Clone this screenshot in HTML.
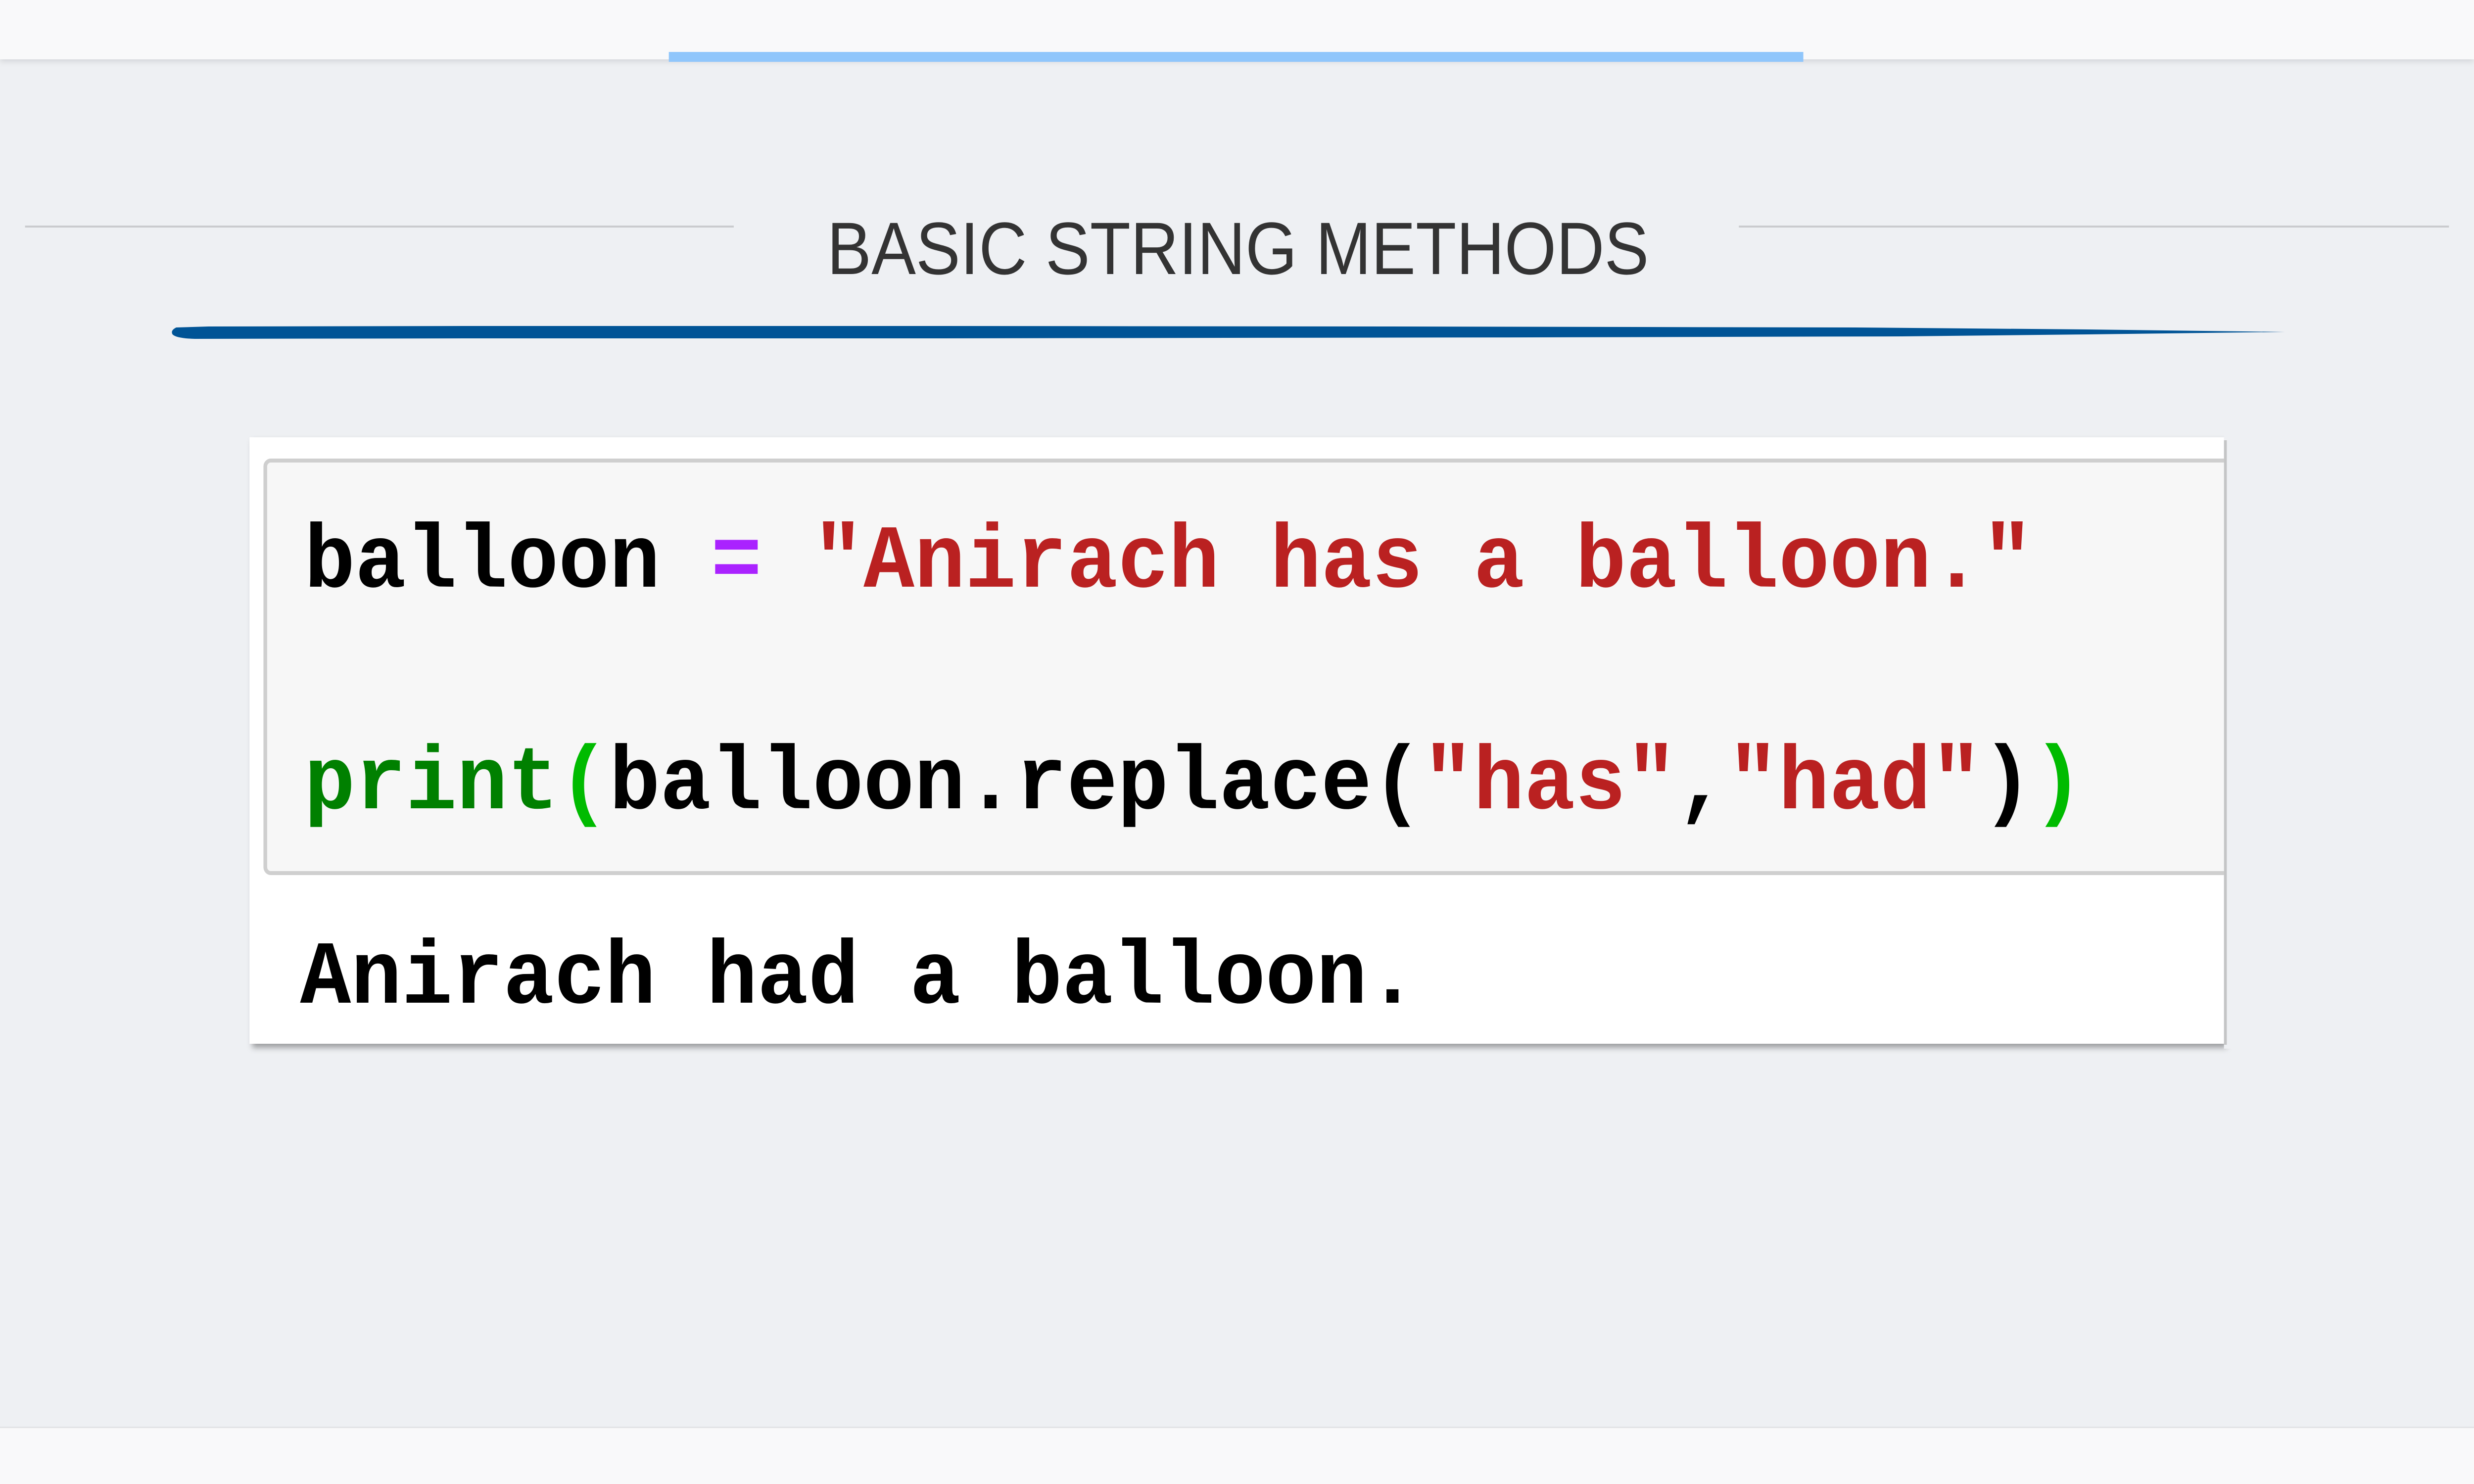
<!DOCTYPE html>
<html><head><meta charset="utf-8"><style>
html,body{margin:0;padding:0;width:100%;height:100%;overflow:hidden;}
body{background:#eef0f3;position:relative;}
svg{display:block;position:absolute;left:0;top:0;width:100vw;height:100vh;}
</style></head><body>
<svg viewBox="0 0 5334 3000" preserveAspectRatio="none">
<defs>
<filter id="sh" x="-5%" y="-5%" width="110%" height="115%"><feDropShadow dx="6" dy="8" stdDeviation="6" flood-color="#000" flood-opacity="0.35"/></filter>
<filter id="tb" x="-5%" y="-50%" width="110%" height="200%"><feDropShadow dx="0" dy="4" stdDeviation="6" flood-color="#000" flood-opacity="0.12"/></filter>
</defs>
<rect x="0" y="0" width="5334" height="3000" fill="#eef0f3"/>
<rect x="0" y="0" width="5334" height="120" fill="#f9f9fa" filter="url(#tb)"/>
<rect x="1442" y="105" width="2446" height="20" fill="#90c6fb"/>
<rect x="0" y="2885" width="5334" height="115" fill="#f9f9fa"/>
<rect x="0" y="2884" width="5334" height="3" fill="#e2e3e6"/>
<rect x="54" y="456" width="1528" height="4" fill="#cacbce"/>
<rect x="3749" y="456" width="1531" height="4" fill="#cacbce"/>
<text x="1783" y="554" textLength="1772" lengthAdjust="spacingAndGlyphs" font-family="Liberation Sans, sans-serif" font-size="150" fill="#333">BASIC STRING METHODS</text>
<path d="M380 662 Q367 668 372 676 Q380 684 420 685 L1000 684 L2000 684 L3300 682 L4100 680 L4500 676 L4926 671 L4500 666 L4000 662 L3000 660 L2000 659 L1000 659 L450 660 Z" fill="#005496"/>
<rect x="538" y="884" width="4257" height="1226" fill="#fff" filter="url(#sh)"/>
<rect x="572" y="931" width="4240" height="834" rx="12" fill="#f7f7f7" stroke="#cfcfcf" stroke-width="8"/>
<rect x="4795" y="880" width="40" height="1240" fill="#eef0f3"/>
<rect x="4795" y="890" width="6" height="1222" fill="#999" opacity="0.5"/>
<g font-family="Liberation Mono, monospace" font-weight="bold" font-size="182">
<text x="656" y="1186" textLength="3727" lengthAdjust="spacingAndGlyphs"><tspan fill="#000">balloon </tspan><tspan fill="#aa22ff">=</tspan><tspan fill="#ba2121"> "Anirach has a balloon."</tspan></text>
<text x="656" y="1634" textLength="3836" lengthAdjust="spacingAndGlyphs"><tspan fill="#008000">print</tspan><tspan fill="#00bb00">(</tspan><tspan fill="#000">balloon.replace(</tspan><tspan fill="#ba2121">"has"</tspan><tspan fill="#000">,</tspan><tspan fill="#ba2121">"had"</tspan><tspan fill="#000">)</tspan><tspan fill="#00bb00">)</tspan></text>
<text x="647" y="2027" textLength="2410" lengthAdjust="spacingAndGlyphs" fill="#000">Anirach had a balloon.</text>
</g>
</svg>
</body></html>
